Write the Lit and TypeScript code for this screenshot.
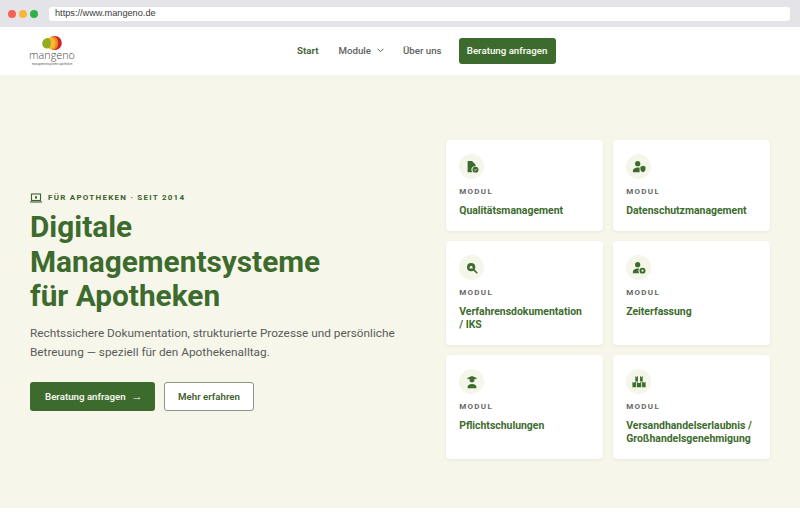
import { LitElement, html, css, svg } from "lit";
import { customElement } from "lit/decorators.js";

const ICONS = {
  doc: svg`<path d="M3 1h5l4 4v2.200a4 4 0 0 0-3.600 6.800H3z"/><circle cx="12" cy="11" r="3.400"/><path d="M10.500 11l1.100 1.100 1.900-2" fill="none" stroke="#f3f6e8" stroke-width=".9"/>`,
  shield: svg`<circle cx="6.500" cy="4.200" r="3"/><path d="M1 14v-1.600C1 10 3.600 8.600 6.500 8.600c.8 0 1.500.1 2.200.3V14z"/><path d="M9.600 7.600l2.900-1 2.900 1v2.600c0 1.900-1.200 3.200-2.900 3.800-1.700-.6-2.900-1.900-2.900-3.800z"/>`,
  search: svg`<circle cx="7" cy="7" r="4.700"/><path d="M10.200 10.200l3.800 3.800" fill="none" stroke="#3d6b2e" stroke-width="1.800"/><path d="M5 8.700l1-2.900h2l1 2.900z" fill="#f3f6e8"/>`,
  clock: svg`<circle cx="6.500" cy="4.200" r="3"/><path d="M1 14v-1.600C1 10 3.600 8.600 6.500 8.600c.6 0 1.200.1 1.800.2A4 4 0 0 0 8.400 14z"/><circle cx="12" cy="11" r="3.400"/><circle cx="12" cy="11" r="1.200" fill="#f3f6e8"/>`,
  grad: svg`<path d="M8 1l6 2.600-6 2.800-6-2.800z"/><path d="M5 5.800h6A3 3 0 0 1 8 8.600a3 3 0 0 1-3-2.800z"/><path d="M3 15v-1.400c0-2 2.200-3.400 5-3.400s5 1.400 5 3.400V15z"/>`,
  boxes: svg`<path d="M3.800 1.500h1v1h1v-1h1v6h-3zM9.200 1.500h1v1h1v-1h1v6h-3zM.5 8h1v1h1V8h2v6h-4zM5.500 8h1v1h3V8h1v6h-5zM11.500 8h2v1h1V8h1v6h-4z"/>`,
};

const MODULES: { icon: keyof typeof ICONS; lines: string[] }[] = [
  { icon: "doc", lines: ["Qualitätsmanagement"] },
  { icon: "shield", lines: ["Datenschutzmanagement"] },
  { icon: "search", lines: ["Verfahrensdokumentation", "/ IKS"] },
  { icon: "clock", lines: ["Zeiterfassung"] },
  { icon: "grad", lines: ["Pflichtschulungen"] },
  { icon: "boxes", lines: ["Versandhandelserlaubnis /", "Großhandelsgenehmigung"] },
];

@customElement("app-root")
export class AppRoot extends LitElement {
  static styles = css`
    :host {
      display: block;
      height: 528px;
      overflow: hidden;
      background: #fff;
      font-family: Roboto, "Liberation Sans", sans-serif;
      color: #3d6b2e;
    }

    /* browser chrome */
    .chrome {
      height: 27px;
      box-sizing: border-box;
      padding: 7px 10px 6px 8px;
      display: flex;
      align-items: center;
      background: #e3e3e8;
    }
    .dot { width: 8px; height: 8px; border-radius: 50%; margin-right: 3px; }
    .url {
      flex: 1;
      height: 14px;
      margin-left: 8px;
      padding-left: 6px;
      border-radius: 3px;
      background: #fff;
      color: #3a3a3c;
      font: 9.200px/13px "Liberation Sans", sans-serif;
    }

    /* nav */
    .nav {
      height: 49px;
      box-sizing: border-box;
      padding: 0 244px 1px 30px;
      display: flex;
      align-items: center;
      background: #fff;
      border-bottom: 1px solid #f4f4f0;
    }
    .logo { display: flex; flex-direction: column; align-items: center; width: 44px; margin-right: 223px; }
    .logo svg { display: block; }
    .logo-name { font: 300 10.800px/9px "Open Sans", sans-serif; color: #4a4a4a; }
    .logo-sub { margin-top: 3px; font: 2.800px/4px "Liberation Sans", sans-serif; color: #555; white-space: nowrap; }
    .links { display: flex; align-items: center; font-size: 9.700px; font-weight: 500; color: #5f5f5f; }
    .links span { white-space: nowrap; }
    .start { color: #46683a; font-weight: 700; margin-right: 20px; }
    .module { display: flex; align-items: center; gap: 6px; margin-right: 19px; }
    .btn-nav {
      margin-left: 17px;
      width: 97px;
      height: 26px;
      display: flex;
      align-items: center;
      justify-content: center;
      border-radius: 3px;
      background: #3d6b2e;
      color: #f4f6ec;
      font-weight: 600;
      white-space: nowrap;
    }

    /* hero */
    .hero {
      height: 432px;
      box-sizing: border-box;
      padding: 64px 30px 0;
      display: grid;
      grid-template-columns: 416px 324px;
      background: #f6f7ea;
    }
    .left { padding-top: 51px; }
    .eyebrow {
      display: flex;
      align-items: center;
      gap: 6px;
      font-size: 8px;
      font-weight: 700;
      letter-spacing: 1.250px;
      color: #3f5f30;
      line-height: 14px;
    }
    h1 { margin: 5px 0 0; font-size: 29.800px; line-height: 34.500px; font-weight: 700; color: #3d6b2e; }
    .lede { margin: 10px 0 0; font-size: 11.800px; line-height: 19px; color: #5a5a5a; }
    .actions { display: flex; gap: 9px; margin-top: 20px; }
    .btn {
      height: 29px;
      box-sizing: border-box;
      display: flex;
      align-items: center;
      border-radius: 3px;
      font-size: 9.700px;
      font-weight: 600;
      white-space: nowrap;
    }
    .primary { width: 125px; padding-left: 15px; gap: 6px; background: #3d6b2e; color: #f4f6ec; }
    .arrow { font-size: 11px; }
    .secondary { width: 90px; justify-content: center; background: #fff; color: #3f5f30; border: 1px solid #8a9a80; }

    /* module cards */
    .cards { display: grid; grid-template-columns: 157px 157px; grid-template-rows: 91px 104px 104px; gap: 10px; }
    .card {
      box-sizing: border-box;
      padding: 14px 13px 0 13.200px;
      border-radius: 4px;
      background: #fff;
      box-shadow: 0 1px 3px rgba(60, 60, 80, .08);
    }
    .badge {
      width: 25px;
      height: 25px;
      display: flex;
      align-items: center;
      justify-content: center;
      border-radius: 50%;
      background: #f3f6e8;
    }
    .badge svg { width: 14px; height: 14px; fill: #3d6b2e; }
    .tag { margin-top: 7px; font-size: 8px; line-height: 12px; font-weight: 700; letter-spacing: 1.300px; color: #666; }
    .title { margin-top: 6px; font-size: 10.450px; line-height: 13px; font-weight: 700; color: #3d6b2e; white-space: nowrap; }
  `;

  render() {
    return html`
      <div class="chrome">
        <div class="dot" style="background:#f56153"></div>
        <div class="dot" style="background:#f8b73a"></div>
        <div class="dot" style="background:#2fb14a"></div>
        <div class="url">https://www.mangeno.de</div>
      </div>

      <div class="nav">
        <div class="logo">
          <svg width="20" height="14" viewBox="0 0 20 14">
            <ellipse cx="13" cy="7" rx="6.800" ry="6.900" fill="#c9262b"/>
            <ellipse cx="11" cy="7" rx="5.200" ry="6.800" fill="#ee8a22"/>
            <ellipse cx="9" cy="7.200" rx="4.500" ry="6" fill="#f4b92e"/>
            <path d="M.2 7.600C.2 4.400 3 2 5.600 2c2.200 0 3.200 2.400 3.200 5.300 0 3.100-1.300 5.300-3.500 5.300C2.600 12.600.2 10.600.2 7.600z" fill="#94ab22"/>
          </svg>
          <div class="logo-name">mangeno</div>
          <div class="logo-sub">managementsysteme apotheken</div>
        </div>
        <div class="links">
          <span class="start">Start</span>
          <span class="module">Module
            <svg width="7" height="5" viewBox="0 0 7 5" fill="none" stroke="#666" stroke-width="1"><path d="M.5.700L3.500 3.700 6.500.700"/></svg>
          </span>
          <span>Über uns</span>
          <span class="btn-nav">Beratung anfragen</span>
        </div>
      </div>

      <div class="hero">
        <div class="left">
          <div class="eyebrow">
            <svg width="12" height="10" viewBox="0 0 12 10" fill="none" stroke="#3f5f30" stroke-width="1.100">
              <rect x="1.500" y="1" width="9" height="6.500"/><path d="M0 9h12"/><path d="M5 3.200h2v2.200H5z" fill="#3f5f30" stroke="none"/>
            </svg>
            FÜR APOTHEKEN · SEIT 2014
          </div>
          <h1>Digitale<br />Managementsysteme<br />für Apotheken</h1>
          <p class="lede">Rechtssichere Dokumentation, strukturierte Prozesse und persönliche<br />Betreuung — speziell für den Apothekenalltag.</p>
          <div class="actions">
            <div class="btn primary">Beratung anfragen <span class="arrow">→</span></div>
            <div class="btn secondary">Mehr erfahren</div>
          </div>
        </div>
        <div class="cards">
          ${MODULES.map(
            (m) => html`
              <div class="card">
                <div class="badge"><svg viewBox="0 0 16 16">${ICONS[m.icon]}</svg></div>
                <div class="tag">MODUL</div>
                <div class="title">${m.lines.map((l) => html`<div>${l}</div>`)}</div>
              </div>
            `,
          )}
        </div>
      </div>
    `;
  }
}
